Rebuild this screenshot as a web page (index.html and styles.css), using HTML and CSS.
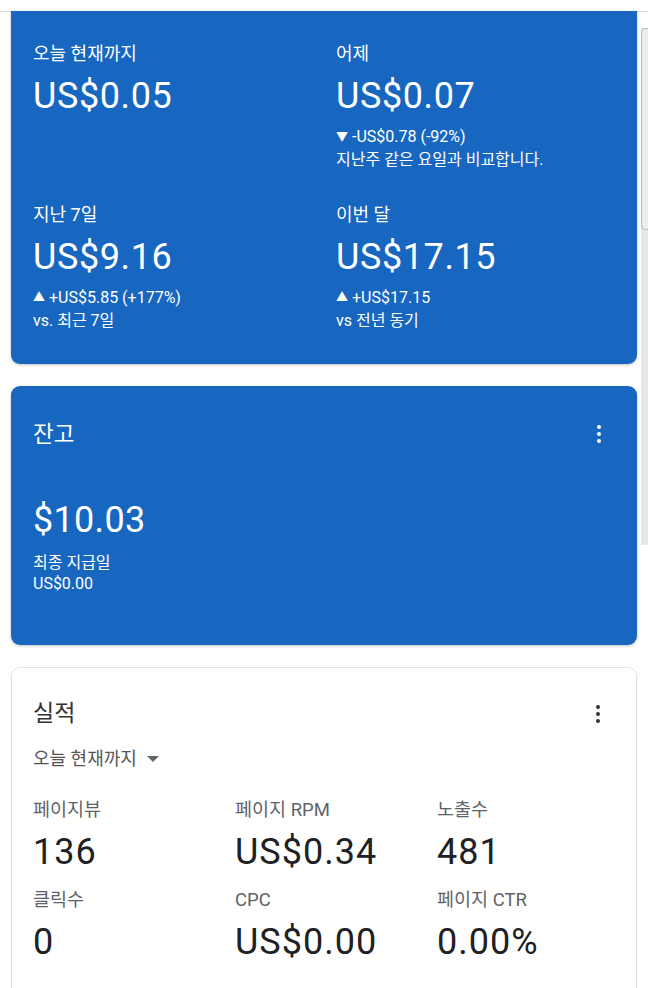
FILE: index.html
```html
<!DOCTYPE html>
<html lang="ko">
<head>
<meta charset="utf-8">
<link rel="stylesheet" href="styles.css">
</head>
<body>
<div class="topbar"></div>
<main class="page">
  <section class="card card-blue card-earnings">
    <div class="stat">
      <div class="stat-label">오늘 현재까지</div>
      <div class="stat-value">US$0.05</div>
    </div>
    <div class="stat">
      <div class="stat-label">어제</div>
      <div class="stat-value">US$0.07</div>
      <div class="stat-delta"><span class="tri">▼</span> -US$0.78 (-92%)<br>지난주 같은 요일과 비교합니다.</div>
    </div>
    <div class="stat">
      <div class="stat-label">지난 7일</div>
      <div class="stat-value">US$9.16</div>
      <div class="stat-delta"><span class="tri">▲</span> +US$5.85 (+177%)<br>vs. 최근 7일</div>
    </div>
    <div class="stat">
      <div class="stat-label">이번 달</div>
      <div class="stat-value">US$17.15</div>
      <div class="stat-delta"><span class="tri">▲</span> +US$17.15<br>vs 전년 동기</div>
    </div>
  </section>

  <section class="card card-blue card-balance">
    <div class="card-head">
      <h2 class="card-title">잔고</h2>
      <span class="kebab kebab-light"><i></i><i></i><i></i></span>
    </div>
    <div class="balance-value">$10.03</div>
    <div class="balance-note">최종 지급일<br>US$0.00</div>
  </section>

  <section class="card card-white card-perf">
    <div class="card-head">
      <h2 class="card-title title-dark">실적</h2>
      <span class="kebab kebab-dark"><i></i><i></i><i></i></span>
    </div>
    <div class="range">오늘 현재까지 <span class="caret"></span></div>
    <div class="metrics">
      <div class="metric"><div class="metric-label">페이지뷰</div><div class="metric-value">136</div></div>
      <div class="metric"><div class="metric-label">페이지 RPM</div><div class="metric-value">US$0.34</div></div>
      <div class="metric"><div class="metric-label">노출수</div><div class="metric-value">481</div></div>
      <div class="metric"><div class="metric-label">클릭수</div><div class="metric-value">0</div></div>
      <div class="metric"><div class="metric-label">CPC</div><div class="metric-value">US$0.00</div></div>
      <div class="metric"><div class="metric-label">페이지 CTR</div><div class="metric-value">0.00%</div></div>
    </div>
  </section>
</main>
<div class="scrolltrack"><div class="scrollthumb"></div></div>
</body>
</html>
```
FILE: styles.css
```css
* { box-sizing: border-box; }
html, body { margin: 0; padding: 0; background: #fff; }
body {
  width: 648px;
  height: 988px;
  overflow: hidden;
  position: relative;
  font-family: Roboto, "Noto Sans CJK KR", sans-serif;
  color: #202124;
}
.topbar {
  height: 12px;
  border-bottom: 1px solid #dcdcdc;
}
.page {
  padding: 0 11px;
  display: flex;
  flex-direction: column;
  gap: 22px;
}
.card {
  border-radius: 9px;
  box-shadow: 0 1px 3px rgba(0,0,0,0.25);
}
.card-blue {
  background: #1766c0;
  color: #fff;
}
.card-white {
  background: #fff;
  border: 1px solid #e3e3e3;
  box-shadow: 0 1px 2px rgba(0,0,0,0.08);
}
.card-earnings {
  border-radius: 0 0 9px 9px;
  margin-top: -1px;
  padding: 31px 22px 32px;
  display: grid;
  grid-template-columns: 303px 1fr;
  row-gap: 32px;
}
.stat-label {
  font-size: 18px;
  line-height: 24px;
}
.stat-value {
  margin-top: 8px;
  font-size: 36px;
  line-height: 44px;
  letter-spacing: 0.6px;
}
.stat-delta {
  margin-top: 8px;
  font-size: 16px;
  line-height: 22.5px;
}
.tri {
  display: inline-block;
  font-size: 12px;
  line-height: 1;
  vertical-align: 1px;
}
.card-head {
  display: flex;
  justify-content: space-between;
  align-items: center;
}
.card-title {
  margin: 0;
  font-weight: 400;
  font-size: 22.5px;
  line-height: 28px;
}
.title-dark { color: #333; font-size: 23px; line-height: 30px; }
.kebab {
  display: flex;
  flex-direction: column;
  align-items: center;
  gap: 2.5px;
  width: 8px;
  margin-right: 34px;
}
.kebab i {
  display: block;
  width: 4.5px;
  height: 4.5px;
  border-radius: 50%;
}
.kebab-light i { background: #fff; }
.kebab-dark i { background: #333; }
.card-balance {
  padding: 34px 0 51px 22px;
}
.balance-value {
  margin-top: 50px;
  font-size: 36px;
  line-height: 44px;
  letter-spacing: 0.3px;
}
.balance-note {
  margin-top: 10px;
  font-size: 16px;
  line-height: 21px;
}
.card-perf {
  padding: 31px 0 40px 21px;
  height: 340px;
}
.range {
  margin-top: 18px;
  font-size: 18px;
  line-height: 24px;
  color: #555;
  display: flex;
  align-items: center;
  gap: 6px;
}
.caret {
  display: inline-block;
  width: 0;
  height: 0;
  border-left: 6px solid transparent;
  border-right: 6px solid transparent;
  border-top: 6px solid #666;
  margin-left: 4px;
}
.metrics {
  margin-top: 27px;
  display: grid;
  grid-template-columns: 202px 202px 1fr;
  row-gap: 14px;
}
.metric-label {
  font-size: 18.5px;
  line-height: 24px;
  color: #5f6368;
}
.metric-value {
  margin-top: 8px;
  font-size: 36px;
  line-height: 44px;
  letter-spacing: 1px;
  color: #202124;
}
.scrolltrack {
  position: absolute;
  left: 641px;
  top: 28px;
  width: 7px;
  height: 517px;
  background: #e8e8e8;
}
.scrollthumb {
  height: 202px;
  border: 1px solid #b8b8b8;
  border-right: none;
  border-radius: 5px 0 0 5px;
  background: #ededed;
}
```
